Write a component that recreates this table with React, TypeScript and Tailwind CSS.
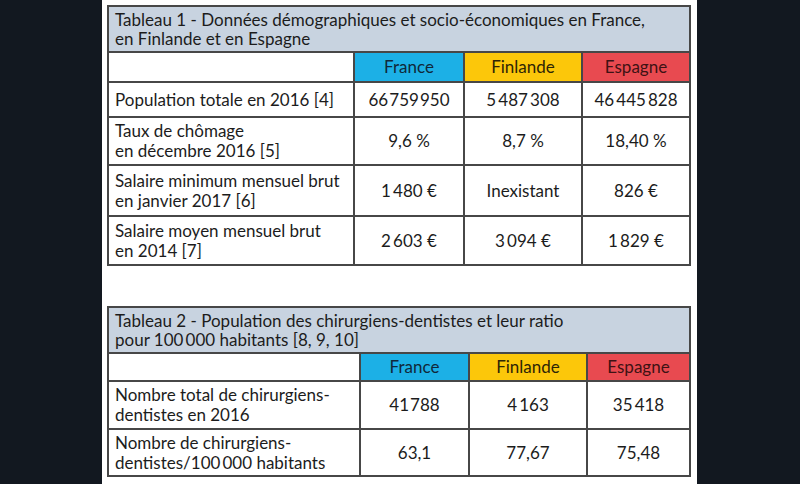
import React from "react";

const font = { fontFamily: "Lato, 'Open Sans', sans-serif" };

type Row = { label: string[]; values: string[]; h: string };

function Table({
  title,
  cols,
  headH,
  countryH,
  rows,
}: {
  title: string[];
  cols: string;
  headH: string;
  countryH: string;
  rows: Row[];
}) {
  return (
    <div className={`grid ${cols} gap-[2px] bg-[#474747] p-[2px] w-[584px]`}>
      <div className={`col-span-4 bg-[#c8d3e0] ${headH} pl-[6px] pt-[3px] text-[17px] leading-[19px] text-[#1c1c1c]`}>
        {title.map((t, i) => (
          <div key={i}>{t}</div>
        ))}
      </div>
      <div className={`bg-white ${countryH}`} />
      <div className={`bg-[#1cb0e6] ${countryH} flex items-center justify-center text-[17px] text-[#10283a]`}>France</div>
      <div className={`bg-[#fcc70a] ${countryH} flex items-center justify-center text-[17px] text-[#2e2506]`}>Finlande</div>
      <div className={`bg-[#e84a50] ${countryH} flex items-center justify-center text-[17px] text-[#3e1214]`}>Espagne</div>
      {rows.map((r, i) => (
        <React.Fragment key={i}>
          <div className={`bg-white ${r.h} flex flex-col justify-center pl-[6px] text-[17px] leading-[20px] text-[#1c1c1c]`}>
            {r.label.map((l, j) => (
              <div key={j}>{l}</div>
            ))}
          </div>
          {r.values.map((v, j) => (
            <div key={j} className={`bg-white ${r.h} flex items-center justify-center text-[17px] text-[#1c1c1c]`}>
              {v}
            </div>
          ))}
        </React.Fragment>
      ))}
    </div>
  );
}

export default function App() {
  return (
    <div className="w-[800px] h-[484px] bg-[#121820] pl-[102px] overflow-hidden" style={font}>
      <div className="w-[595px] h-[484px] bg-white pl-[5px] pt-[5px] flex flex-col">
        <Table
          title={[
            "Tableau 1 - Données démographiques et socio-économiques en France,",
            "en Finlande et en Espagne",
          ]}
          cols="grid-cols-[244px_108px_116px_106px]"
          headH="h-[44px]"
          countryH="h-[28px]"
          rows={[
            { label: ["Population totale en 2016 [4]"], values: ["66\u200A759\u200A950", "5\u2009487\u2009308", "46\u2009445\u2009828"], h: "h-[33px]" },
            { label: ["Taux de chômage", "en décembre 2016 [5]"], values: ["9,6 %", "8,7 %", "18,40 %"], h: "h-[46px]" },
            { label: ["Salaire minimum mensuel brut", "en janvier 2017 [6]"], values: ["1\u2009480 €", "Inexistant", "826 €"], h: "h-[49px]" },
            { label: ["Salaire moyen mensuel brut", "en 2014 [7]"], values: ["2\u2009603 €", "3\u2009094 €", "1\u2009829 €"], h: "h-[47px]" },
          ]}
        />
        <div className="h-[40px] shrink-0" />
        <Table
          title={[
            "Tableau 2 - Population des chirurgiens-dentistes et leur ratio",
            "pour 100\u2009000 habitants [8, 9, 10]",
          ]}
          cols="grid-cols-[250px_107px_116px_101px]"
          headH="h-[44px]"
          countryH="h-[26px]"
          rows={[
            { label: ["Nombre total de chirurgiens-", "dentistes en 2016"], values: ["41\u200A788", "4\u2009163", "35\u2009418"], h: "h-[46px]" },
            { label: ["Nombre de chirurgiens-", "dentistes/100\u2009000 habitants"], values: ["63,1", "77,67", "75,48"], h: "h-[45px]" },
          ]}
        />
      </div>
    </div>
  );
}
